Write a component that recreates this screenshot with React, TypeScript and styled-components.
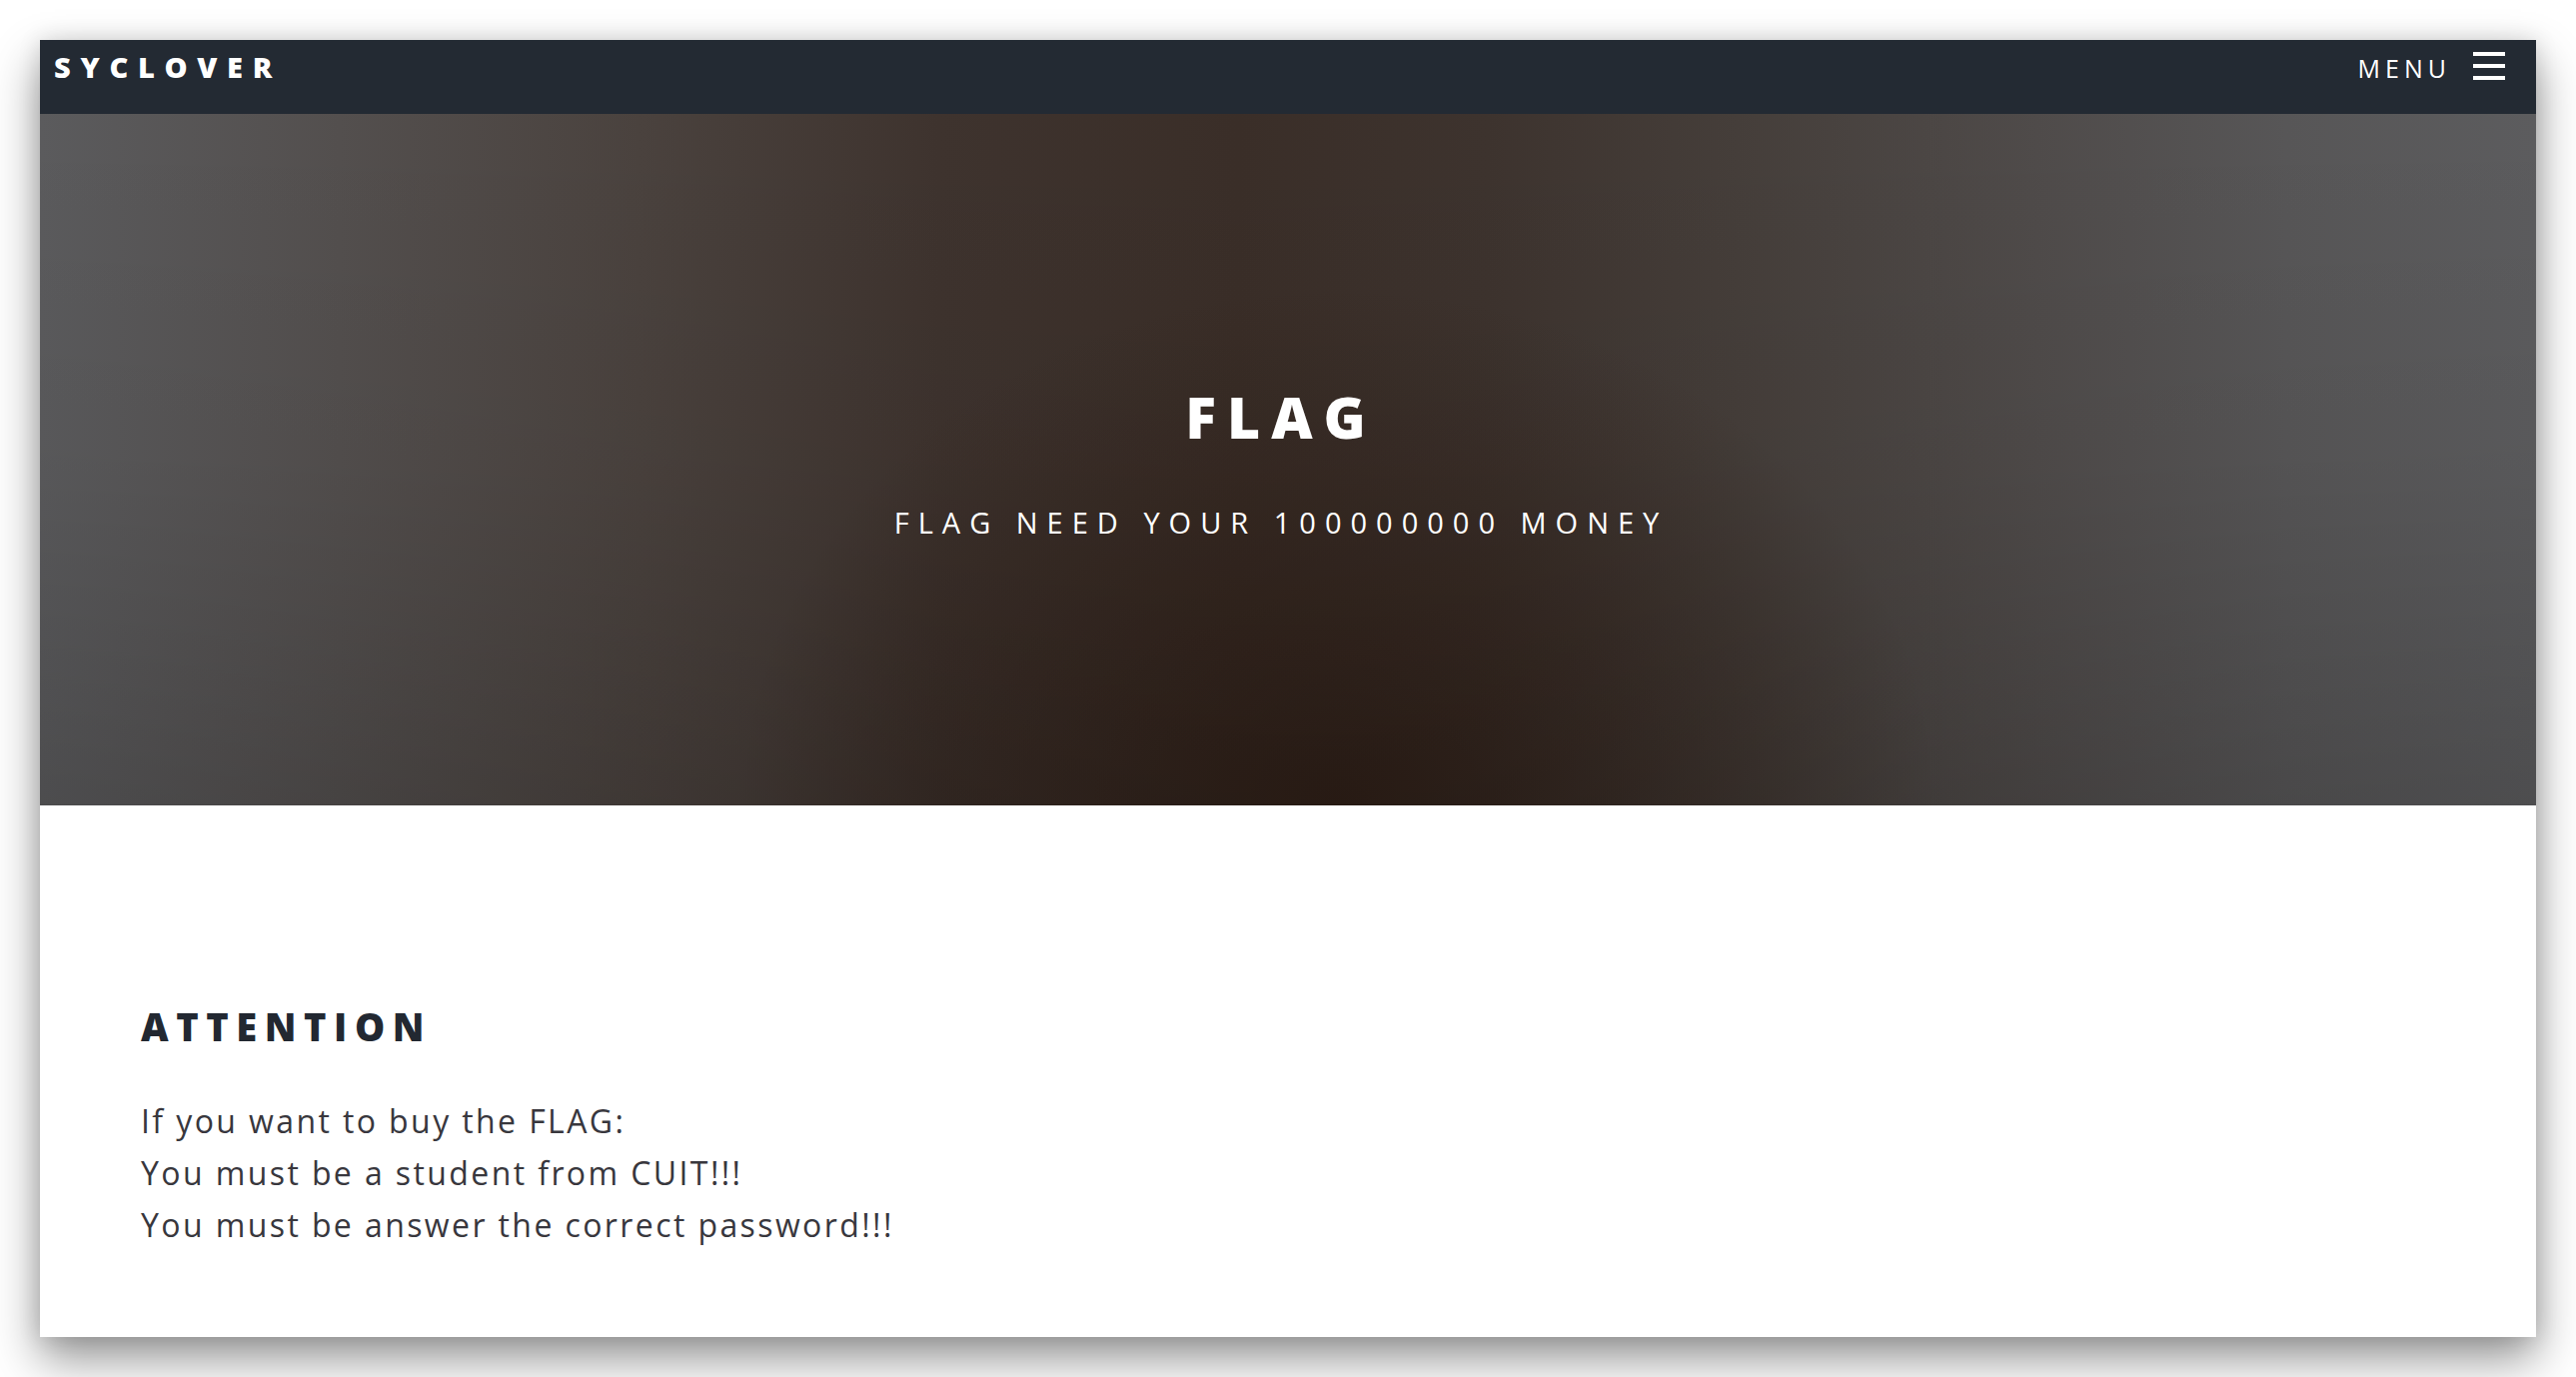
import React from "react";
import styled, { createGlobalStyle } from "styled-components";

const GlobalStyle = createGlobalStyle`
  html, body {
    margin: 0;
    padding: 0;
    background: #ffffff;
  }
  * { box-sizing: border-box; }
`;

const Page = styled.div`
  width: 2578px;
  height: 1378px;
  padding: 40px;
  background: #ffffff;
`;

const Window = styled.div`
  width: 2498px;
  height: 1298px;
  display: flex;
  flex-direction: column;
  overflow: hidden;
  background: #ffffff;
  box-shadow: 0 22px 44px rgba(0, 0, 0, 0.42), 0 0 22px rgba(0, 0, 0, 0.12);
  font-family: "Open Sans", "Noto Sans", sans-serif;
`;

const NavBar = styled.nav`
  height: 74px;
  flex: none;
  display: flex;
  justify-content: space-between;
  align-items: flex-start;
  padding: 12px 31px 0 14px;
  background: #232a33;
`;

const Brand = styled.a`
  font-size: 29px;
  line-height: 1;
  font-weight: 800;
  letter-spacing: 9.7px;
  color: #ffffff;
  text-transform: uppercase;
  text-decoration: none;
`;

const MenuButton = styled.button`
  display: flex;
  align-items: flex-start;
  gap: 22px;
  padding: 0;
  border: 0;
  background: transparent;
  color: #ffffff;
  font-family: inherit;
  cursor: pointer;
`;

const MenuLabel = styled.span`
  padding-top: 4px;
  font-size: 25px;
  line-height: 1;
  font-weight: 400;
  letter-spacing: 5px;
  text-transform: uppercase;
`;

const Burger = styled.span`
  width: 32px;
  height: 28px;
  display: flex;
  flex-direction: column;
  justify-content: space-between;
`;

const BurgerBar = styled.span`
  display: block;
  height: 4px;
  background: #ffffff;
`;

const Hero = styled.header`
  height: 692px;
  flex: none;
  display: flex;
  flex-direction: column;
  align-items: center;
  padding: 275px 14px 0 0;
  color: #ffffff;
  background:
    linear-gradient(180deg, rgba(0, 0, 0, 0) 0%, rgba(0, 0, 0, 0.04) 50%, rgba(0, 0, 0, 0.16) 100%),
    radial-gradient(ellipse 24% 75% at 52% 100%, rgba(44, 28, 20, 0.85) 0%, rgba(44, 28, 20, 0) 100%),
    linear-gradient(90deg, #5b5b5d 0%, #534f4e 12%, #4a423e 24%, #3e332e 36%, #3a2e28 48%, #3d332e 58%, #453e3a 68%, #4f4b4a 80%, #575657 90%, #5c5c5e 100%);
`;

const HeroTitle = styled.h1`
  margin: 0;
  font-size: 57px;
  line-height: 1;
  font-weight: 800;
  letter-spacing: 11px;
  text-transform: uppercase;
`;

const HeroSubtitle = styled.p`
  margin: 62px 0 0;
  font-size: 29px;
  line-height: 1;
  font-weight: 400;
  letter-spacing: 9px;
  text-transform: uppercase;
`;

const Content = styled.section`
  flex: 1;
  padding: 202px 101px 0;
  background: #ffffff;
`;

const SectionHeading = styled.h2`
  margin: 0;
  font-size: 38px;
  line-height: 1;
  font-weight: 800;
  letter-spacing: 7.6px;
  color: #222831;
  text-transform: uppercase;
`;

const Body = styled.div`
  margin-top: 50px;
  font-size: 32px;
  line-height: 52px;
  font-weight: 400;
  letter-spacing: 2.4px;
  color: #38373d;
`;

const Line = styled.p`
  margin: 0;
`;

export default function App() {
  return (
    <>
      <GlobalStyle />
      <Page>
        <Window>
          <NavBar>
            <Brand href="#">Syclover</Brand>
            <MenuButton type="button">
              <MenuLabel>Menu</MenuLabel>
              <Burger aria-hidden>
                <BurgerBar />
                <BurgerBar />
                <BurgerBar />
              </Burger>
            </MenuButton>
          </NavBar>
          <Hero>
            <HeroTitle>Flag</HeroTitle>
            <HeroSubtitle>Flag need your 100000000 money</HeroSubtitle>
          </Hero>
          <Content>
            <SectionHeading>Attention</SectionHeading>
            <Body>
              <Line>If you want to buy the FLAG:</Line>
              <Line>You must be a student from CUIT!!!</Line>
              <Line>You must be answer the correct password!!!</Line>
            </Body>
          </Content>
        </Window>
      </Page>
    </>
  );
}
